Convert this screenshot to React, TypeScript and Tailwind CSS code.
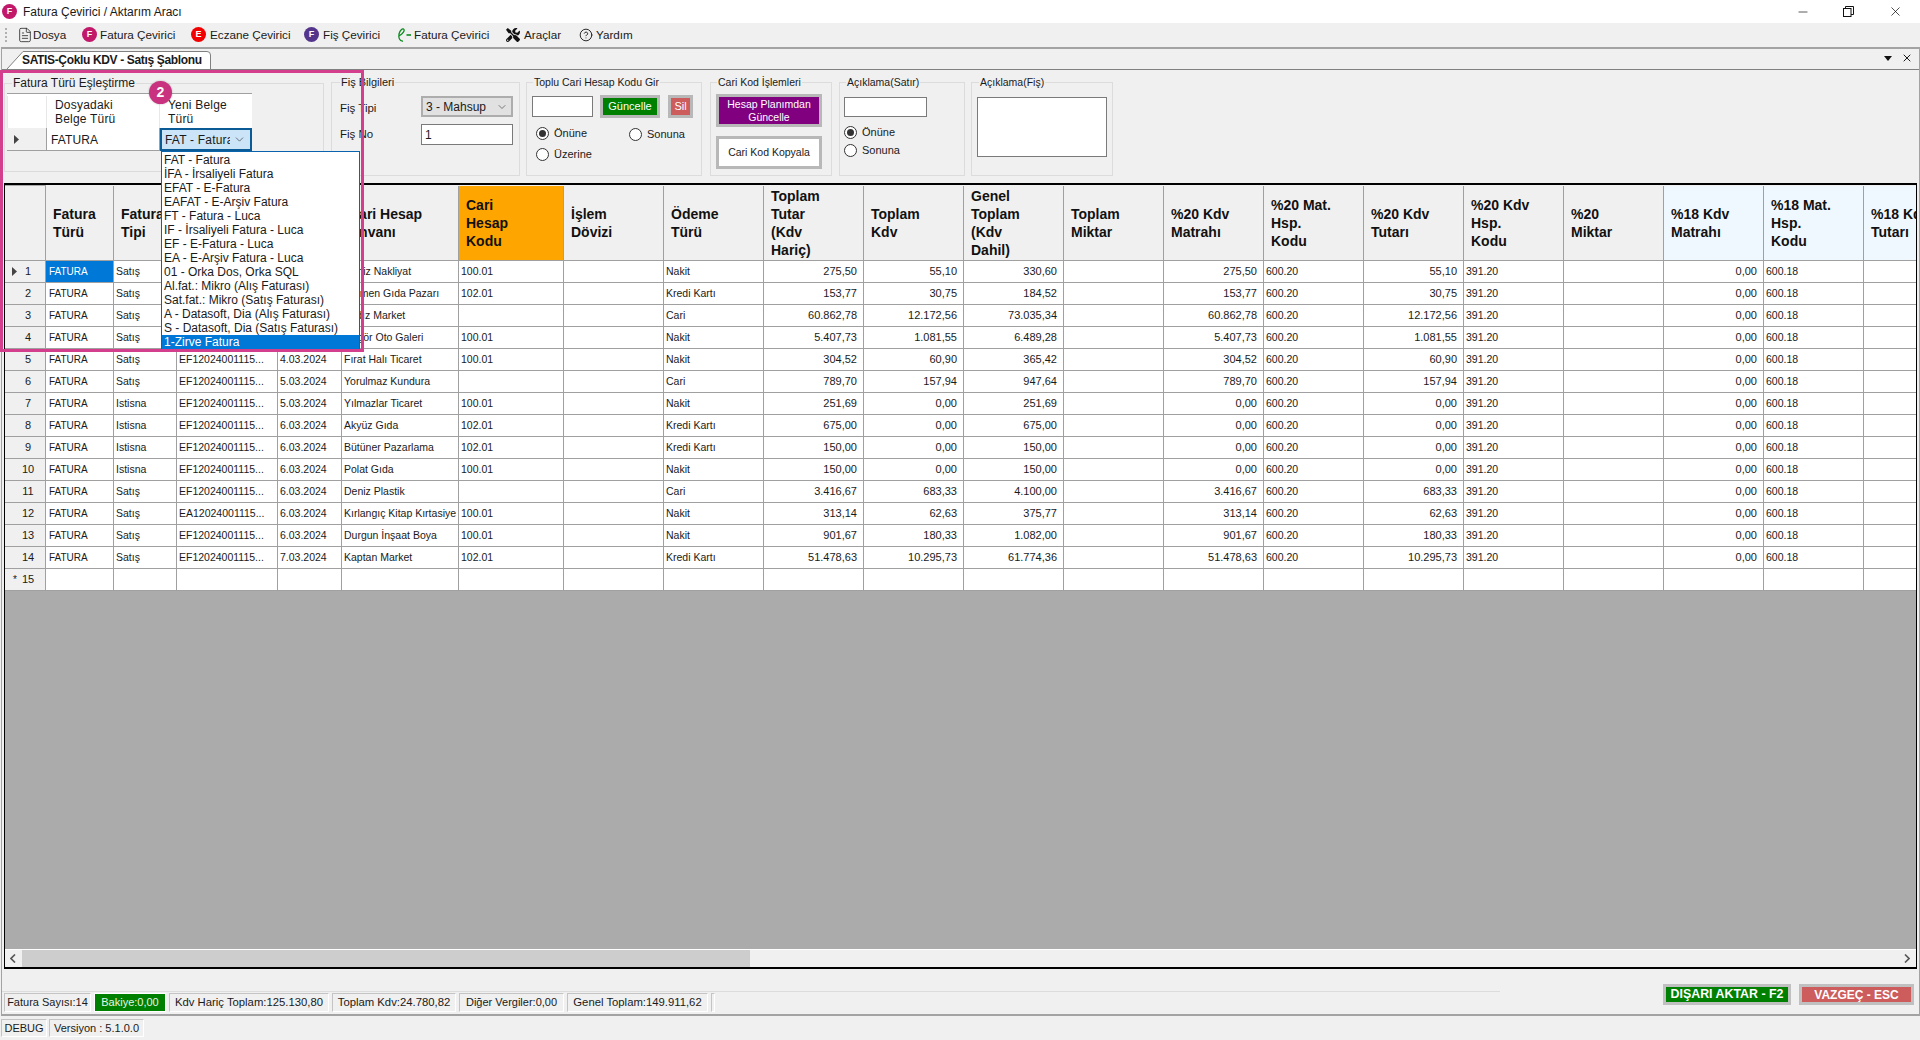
import { CircleHelp, FileText, ChevronDown, Minus, X } from "lucide-react";
import { FaTools } from "react-icons/fa";
import type { ReactNode } from "react";

const gridCols =
  "grid grid-cols-[41px_68px_63px_101px_64px_117px_105px_repeat(14,100px)] w-max";

type Row = {
  tip: string;
  belge: string;
  tarih: string;
  unvan: string;
  kod: string;
  odeme: string;
  tutar: string;
  kdv: string;
  genel: string;
  matrah: string;
  kdv20: string;
};

const rows: Row[] = [
  { tip: "Satış", belge: "EF12024001115...", tarih: "1.03.2024", unvan: "Deniz Nakliyat", kod: "100.01", odeme: "Nakit", tutar: "275,50", kdv: "55,10", genel: "330,60", matrah: "275,50", kdv20: "55,10" },
  { tip: "Satış", belge: "EF12024001115...", tarih: "2.03.2024", unvan: "Erkmen Gıda Pazarı", kod: "102.01", odeme: "Kredi Kartı", tutar: "153,77", kdv: "30,75", genel: "184,52", matrah: "153,77", kdv20: "30,75" },
  { tip: "Satış", belge: "EF12024001115...", tarih: "2.03.2024", unvan: "Yıldız Market", kod: "", odeme: "Cari", tutar: "60.862,78", kdv: "12.172,56", genel: "73.035,34", matrah: "60.862,78", kdv20: "12.172,56" },
  { tip: "Satış", belge: "EF12024001115...", tarih: "3.03.2024", unvan: "Özgör Oto Galeri", kod: "100.01", odeme: "Nakit", tutar: "5.407,73", kdv: "1.081,55", genel: "6.489,28", matrah: "5.407,73", kdv20: "1.081,55" },
  { tip: "Satış", belge: "EF12024001115...", tarih: "4.03.2024", unvan: "Fırat Halı Ticaret", kod: "100.01", odeme: "Nakit", tutar: "304,52", kdv: "60,90", genel: "365,42", matrah: "304,52", kdv20: "60,90" },
  { tip: "Satış", belge: "EF12024001115...", tarih: "5.03.2024", unvan: "Yorulmaz Kundura", kod: "", odeme: "Cari", tutar: "789,70", kdv: "157,94", genel: "947,64", matrah: "789,70", kdv20: "157,94" },
  { tip: "Istisna", belge: "EF12024001115...", tarih: "5.03.2024", unvan: "Yılmazlar Ticaret", kod: "100.01", odeme: "Nakit", tutar: "251,69", kdv: "0,00", genel: "251,69", matrah: "0,00", kdv20: "0,00" },
  { tip: "Istisna", belge: "EF12024001115...", tarih: "6.03.2024", unvan: "Akyüz Gıda", kod: "102.01", odeme: "Kredi Kartı", tutar: "675,00", kdv: "0,00", genel: "675,00", matrah: "0,00", kdv20: "0,00" },
  { tip: "Istisna", belge: "EF12024001115...", tarih: "6.03.2024", unvan: "Bütüner Pazarlama", kod: "102.01", odeme: "Kredi Kartı", tutar: "150,00", kdv: "0,00", genel: "150,00", matrah: "0,00", kdv20: "0,00" },
  { tip: "Istisna", belge: "EF12024001115...", tarih: "6.03.2024", unvan: "Polat Gıda", kod: "100.01", odeme: "Nakit", tutar: "150,00", kdv: "0,00", genel: "150,00", matrah: "0,00", kdv20: "0,00" },
  { tip: "Satış", belge: "EF12024001115...", tarih: "6.03.2024", unvan: "Deniz Plastik", kod: "", odeme: "Cari", tutar: "3.416,67", kdv: "683,33", genel: "4.100,00", matrah: "3.416,67", kdv20: "683,33" },
  { tip: "Satış", belge: "EA12024001115...", tarih: "6.03.2024", unvan: "Kırlangıç Kitap Kırtasiye", kod: "100.01", odeme: "Nakit", tutar: "313,14", kdv: "62,63", genel: "375,77", matrah: "313,14", kdv20: "62,63" },
  { tip: "Satış", belge: "EF12024001115...", tarih: "6.03.2024", unvan: "Durgun İnşaat Boya", kod: "100.01", odeme: "Nakit", tutar: "901,67", kdv: "180,33", genel: "1.082,00", matrah: "901,67", kdv20: "180,33" },
  { tip: "Satış", belge: "EF12024001115...", tarih: "7.03.2024", unvan: "Kaptan Market", kod: "102.01", odeme: "Kredi Kartı", tutar: "51.478,63", kdv: "10.295,73", genel: "61.774,36", matrah: "51.478,63", kdv20: "10.295,73" },
];

const headers: { lines: string[]; tone?: string }[] = [
  { lines: ["Fatura", "Türü"] },
  { lines: ["Fatura", "Tipi"] },
  { lines: ["Belge", "No"] },
  { lines: ["Tarih"] },
  { lines: ["Cari Hesap", "Ünvanı"] },
  { lines: ["Cari", "Hesap", "Kodu"], tone: "bg-[#ffa500]" },
  { lines: ["İşlem", "Dövizi"] },
  { lines: ["Ödeme", "Türü"] },
  { lines: ["Toplam", "Tutar", "(Kdv", "Hariç)"] },
  { lines: ["Toplam", "Kdv"] },
  { lines: ["Genel", "Toplam", "(Kdv", "Dahil)"] },
  { lines: ["Toplam", "Miktar"] },
  { lines: ["%20 Kdv", "Matrahı"] },
  { lines: ["%20 Mat.", "Hsp.", "Kodu"] },
  { lines: ["%20 Kdv", "Tutarı"] },
  { lines: ["%20 Kdv", "Hsp.", "Kodu"] },
  { lines: ["%20", "Miktar"] },
  { lines: ["%18 Kdv", "Matrahı"], tone: "bg-[#f0f8ff]" },
  { lines: ["%18 Mat.", "Hsp.", "Kodu"], tone: "bg-[#f0f8ff]" },
  { lines: ["%18 Kdv", "Tutarı"], tone: "bg-[#f0f8ff]" },
];

const dropdownItems = [
  "FAT - Fatura",
  "İFA - İrsaliyeli Fatura",
  "EFAT - E-Fatura",
  "EAFAT - E-Arşiv Fatura",
  "FT - Fatura - Luca",
  "IF - İrsaliyeli Fatura - Luca",
  "EF - E-Fatura - Luca",
  "EA - E-Arşiv Fatura - Luca",
  "01 - Orka Dos, Orka SQL",
  "Al.fat.: Mikro (Alış Faturası)",
  "Sat.fat.: Mikro (Satış Faturası)",
  "A - Datasoft, Dia (Alış Faturası)",
  "S - Datasoft, Dia (Satış Faturası)",
  "1-Zirve Fatura",
];

function Triangle() {
  return (
    <svg width="5" height="9" viewBox="0 0 5 9" className="shrink-0">
      <path d="M0 0 L5 4.5 L0 9 Z" fill="#444" />
    </svg>
  );
}

function LetterIcon({ letter, tone }: { letter: string; tone: string }) {
  return (
    <span className={`flex h-[15px] w-[15px] items-center justify-center rounded-full text-[9px] font-bold leading-none text-white ${tone}`}>
      {letter}
    </span>
  );
}

function MenuItem({ icon, label, className }: { icon: ReactNode; label: string; className: string }) {
  return (
    <div className={`flex items-center ${className}`}>
      {icon}
      <span className="text-[11.7px] text-[#1a1a1a] whitespace-nowrap">{label}</span>
    </div>
  );
}

function Group({ title, className, titleClass, children }: { title: string; className: string; titleClass: string; children?: ReactNode }) {
  return (
    <div className={`relative shrink-0 border border-[#dcdcdc] ${className}`}>
      <span className={`absolute top-[-8px] bg-[#f0f0f0] px-[1px] leading-[14px] text-[#1a1a1a] whitespace-nowrap ${titleClass}`}>
        {title}
      </span>
      {children}
    </div>
  );
}

function Radio({ label, checked, className = "" }: { label: string; checked?: boolean; className?: string }) {
  return (
    <div className={`flex items-center gap-[5px] text-[11px] leading-[14px] text-[#1a1a1a] ${className}`}>
      <span className="flex h-[13px] w-[13px] items-center justify-center rounded-full border border-[#333] bg-white">
        {checked && <span className="h-[7px] w-[7px] rounded-full bg-[#333]" />}
      </span>
      {label}
    </div>
  );
}

function StatusBox({ children, className }: { children: ReactNode; className: string }) {
  return (
    <div className={`flex items-center justify-center border border-t-[#c4c4c4] border-l-[#c4c4c4] border-r-white border-b-white whitespace-nowrap ${className}`}>
      {children}
    </div>
  );
}

function GridCell({ children, className = "" }: { children?: ReactNode; className?: string }) {
  return (
    <div className={`flex h-[22px] items-center overflow-hidden whitespace-nowrap border-b border-r border-[#a0a0a0] bg-white text-[#1a1a1a] ${className}`}>
      {children}
    </div>
  );
}

function Num({ value }: { value?: string }) {
  return <GridCell className="justify-end pr-[6px] text-[11px]">{value}</GridCell>;
}

function Txt({ value }: { value?: string }) {
  return <GridCell className="pl-[2px] text-[10.5px]">{value}</GridCell>;
}

export default function App() {
  return (
    <div className="relative flex h-[1040px] w-[1920px] flex-col overflow-hidden bg-[#f0f0f0] font-['Liberation_Sans',Arial,sans-serif] text-[#1a1a1a]">
      {/* title bar */}
      <div className="flex h-[23px] shrink-0 items-center bg-white pl-[2px]">
        <LetterIcon letter="F" tone="bg-[#c2186a]" />
        <span className="ml-[6px] text-[12px] text-[#1a1a1a]">Fatura Çevirici / Aktarım Aracı</span>
        <div className="ml-auto flex items-center text-black">
          <Minus size={14} strokeWidth={1.1} className="mr-[33px]" />
          <svg width="11" height="11" viewBox="0 0 11 11" className="mr-[34px]" fill="none" stroke="#111">
            <rect x="0.5" y="2.5" width="7.5" height="8" />
            <path d="M2.5 2.5 V0.5 H10.5 V8.5 H8" />
          </svg>
          <X size={15} strokeWidth={1.1} className="mr-[17px]" />
        </div>
      </div>

      {/* menu */}
      <div className="flex h-[24px] shrink-0 items-center pl-[5px]">
        <div className="mr-[10px] h-[14px] w-[2px] border-l-2 border-dotted border-[#b0b0b0]" />
        <MenuItem className="w-[65px]" icon={<FileText size={16} strokeWidth={1.2} color="#222" />} label="Dosya" />
        <MenuItem className="w-[109px] gap-[3px]" icon={<LetterIcon letter="F" tone="bg-[#c2186a]" />} label="Fatura Çevirici" />
        <MenuItem className="w-[113px] gap-[4px]" icon={<LetterIcon letter="E" tone="bg-[#f00000]" />} label="Eczane Çevirici" />
        <MenuItem className="w-[92px] gap-[4px]" icon={<LetterIcon letter="F" tone="bg-[#54358c]" />} label="Fiş Çevirici" />
        <MenuItem
          className="w-[110px] gap-[2px]"
          icon={
            <svg width="16" height="16" viewBox="0 0 16 16" fill="none" stroke="#0a8a1e" strokeWidth="1.3">
              <path d="M3 9 C6 7 9 4.5 8 2.5 C7 0.8 4 3 3 7 C2.4 10.5 3.5 14.5 7 14" />
              <path d="M10.5 8 H15" strokeWidth="1.6" />
            </svg>
          }
          label="Fatura Çevirici"
        />
        <MenuItem className="w-[73px] gap-[4px]" icon={<FaTools size={14} color="#111" />} label="Araçlar" />
        <MenuItem className="gap-[3px]" icon={<CircleHelp size={14} strokeWidth={1.5} color="#111" />} label="Yardım" />
      </div>

      {/* main panel */}
      <div className="ml-[1px] flex min-h-0 flex-1 flex-col border-x border-b-2 border-t-2 border-[#a3a3a3]">
        {/* tab strip */}
        <div className="flex h-[21px] shrink-0 items-end border-b border-[#808080]">
          <div className="relative ml-[5px] flex h-[18px] w-[204px] items-center">
            <svg width="204" height="18" viewBox="0 0 204 18" className="absolute inset-0">
              <path d="M0 18 L16 0.5 H200 Q203.5 0.5 203.5 4 V18" fill="white" stroke="#808080" />
            </svg>
            <span className="relative ml-[15px] text-[12px] font-bold tracking-[-0.35px] whitespace-nowrap">SATIS-Çoklu KDV - Satış Şablonu</span>
          </div>
          <div className="ml-auto mb-[5px] flex items-center">
            <svg width="8" height="5" viewBox="0 0 8 5" className="mr-[9px]">
              <path d="M0 0 H8 L4 5 Z" fill="#111" />
            </svg>
            <X size={12} strokeWidth={2} className="mr-[6px]" />
          </div>
        </div>

        {/* option groups */}
        <div className="flex h-[113px] shrink-0 pl-[2px] pt-[12px]">
          <Group title="Fatura Türü Eşleştirme" className="mt-[1px] h-[89px] w-[320px] pl-[2px] pt-[9px]" titleClass="left-[7px] text-[12px]">
            <div className="w-[245px] border-t border-[#a0a0a0] text-[12px]">
              <div className="flex h-[34px] bg-white pt-[2px] leading-[14px]">
                <div className="w-[40px] border-x border-[#e8e8e8]" />
                <div className="flex w-[113px] flex-col justify-center border-r border-[#e8e8e8] pl-[8px] tracking-[0.2px]">
                  <span>Dosyadaki</span>
                  <span>Belge Türü</span>
                </div>
                <div className="flex w-[92px] flex-col justify-center pl-[8px] tracking-[0.2px]">
                  <span>Yeni Belge</span>
                  <span>Türü</span>
                </div>
              </div>
              <div className="flex h-[23px]">
                <div className="flex w-[40px] items-center border-b border-r border-[#a0a0a0] pl-[7px]">
                  <Triangle />
                </div>
                <div className="flex w-[113px] items-center border-b border-r border-[#a0a0a0] bg-white pl-[4px] pt-[2px] tracking-[0.1px]">FATURA</div>
                <div className="flex w-[92px] items-center overflow-hidden border-2 border-[#0a5a96] bg-[#cce4f7] pl-[3px]">
                  <span className="w-[65px] overflow-hidden whitespace-nowrap tracking-[0.2px]">FAT - Fatura</span>
                  <ChevronDown size={13} strokeWidth={1.2} color="#333" className="ml-[3px]" />
                </div>
              </div>
            </div>
          </Group>

          <Group title="Fiş Bilgileri" className="ml-[7px] h-[94px] w-[189px] pl-[8px] pt-[13px]" titleClass="left-[8px] text-[11px]">
            <div className="flex h-[21px] items-center text-[11.5px]">
              <span className="mt-[4px] w-[81px]">Fiş Tipi</span>
              <div className="flex h-[21px] w-[92px] items-center justify-between border-2 border-[#adadad] bg-[#e1e1e1] pl-[3px] pr-[3px]">
                <span className="text-[12px]">3 - Mahsup</span>
                <ChevronDown size={12} strokeWidth={1.2} color="#333" />
              </div>
            </div>
            <div className="mt-[7px] flex h-[21px] items-center text-[11.5px]">
              <span className="w-[81px]">Fiş No</span>
              <div className="flex h-[21px] w-[92px] items-center border border-[#7a7a7a] bg-white pl-[3px] text-[12px]">1</div>
            </div>
          </Group>

          <Group title="Toplu Cari Hesap Kodu Gir" className="ml-[6px] h-[94px] w-[176px] pl-[5px] pt-[12px]" titleClass="left-[6px] text-[10.5px]">
            <div className="flex items-start">
              <div className="mt-[1px] h-[21px] w-[61px] border border-[#7a7a7a] bg-white" />
              <div className="ml-[7px] flex h-[23px] w-[60px] items-center justify-center border-[3px] border-[#b8b8b8] bg-[#008000] text-[11px] text-white">Güncelle</div>
              <div className="ml-[8px] flex h-[23px] w-[25px] items-center justify-center border-[3px] border-[#b8b8b8] bg-[#cd5c5c] text-[11px] text-white">Sil</div>
            </div>
            <div className="mt-[7px] flex h-[16px] pl-[4px]">
              <Radio checked label="Önüne" className="w-[93px]" />
              <Radio label="Sonuna" className="mt-[2px]" />
            </div>
            <Radio label="Üzerine" className="ml-[4px] mt-[6px]" />
          </Group>

          <Group title="Cari Kod İşlemleri" className="ml-[8px] h-[94px] w-[122px] pl-[5px] pt-[11px]" titleClass="left-[6px] text-[10.5px]">
            <div className="flex h-[33px] w-[106px] flex-col items-center justify-center border-[3px] border-[#b8b8b8] bg-[#800080] text-[10.5px] leading-[13px] text-white">
              <span>Hesap Planımdan</span>
              <span>Güncelle</span>
            </div>
            <div className="mt-[9px] flex h-[33px] w-[106px] items-center justify-center border-[3px] border-[#b8b8b8] bg-white text-[10.5px]">Cari Kod Kopyala</div>
          </Group>

          <Group title="Açıklama(Satır)" className="ml-[7px] h-[94px] w-[126px] pl-[4px] pt-[14px]" titleClass="left-[6px] text-[10.5px]">
            <div className="h-[20px] w-[83px] border border-[#7a7a7a] bg-white" />
            <Radio checked label="Önüne" className="mt-[8px]" />
            <Radio label="Sonuna" className="mt-[4px]" />
          </Group>

          <Group title="Açıklama(Fiş)" className="ml-[6px] h-[94px] w-[142px] pl-[5px] pt-[14px]" titleClass="left-[7px] text-[10.5px]">
            <div className="h-[60px] w-[130px] border border-[#7a7a7a] bg-white" />
          </Group>
        </div>

        {/* data grid */}
        <div className="ml-[2px] mr-[2px] flex min-h-0 flex-1 flex-col overflow-hidden border-x border-b-2 border-t-2 border-black bg-[#ababab]">
          <div className="min-h-0 flex-1 overflow-hidden">
            <div className={gridCols}>
              <div className="mt-[1px] h-[75px] border-b border-r border-[#a0a0a0] bg-[#f0f0f0]" />
              {headers.map((h, i) => (
                <div
                  key={i}
                  className="flex h-[76px] flex-col border-b border-[#a0a0a0] bg-[#f0f0f0] pt-[1px] text-[14px] font-bold leading-[18px] text-[#111] whitespace-nowrap"
                >
                  <div className={`flex h-[74px] flex-col justify-center border-r border-[#a0a0a0] pl-[7px] ${h.tone ?? ""}`}>
                    {h.lines.map((l) => (
                      <span key={l}>{l}</span>
                    ))}
                  </div>
                </div>
              ))}
              {rows.flatMap((r, i) => [
                <div key={`n${i}`} className="flex h-[22px] items-center border-b border-r border-[#a0a0a0] bg-[#f0f0f0] text-[11px]">
                  <span className="flex w-[12px] justify-end">{i === 0 && <Triangle />}</span>
                  <span className="w-[22px] text-center">{i + 1}</span>
                </div>,
                <GridCell key={`a${i}`} className={`pl-[3px] text-[10px] ${i === 0 ? "!bg-[#0078d7] text-white" : ""}`}>FATURA</GridCell>,
                <Txt key={`b${i}`} value={r.tip} />,
                <Txt key={`c${i}`} value={r.belge} />,
                <Txt key={`d${i}`} value={r.tarih} />,
                <Txt key={`e${i}`} value={r.unvan} />,
                <Txt key={`f${i}`} value={r.kod} />,
                <Txt key={`g${i}`} />,
                <Txt key={`h${i}`} value={r.odeme} />,
                <Num key={`i${i}`} value={r.tutar} />,
                <Num key={`j${i}`} value={r.kdv} />,
                <Num key={`k${i}`} value={r.genel} />,
                <Txt key={`l${i}`} />,
                <Num key={`m${i}`} value={r.matrah} />,
                <Txt key={`o${i}`} value="600.20" />,
                <Num key={`p${i}`} value={r.kdv20} />,
                <Txt key={`q${i}`} value="391.20" />,
                <Txt key={`r${i}`} />,
                <Num key={`s${i}`} value="0,00" />,
                <Txt key={`t${i}`} value="600.18" />,
                <Num key={`u${i}`} value="0,00" />,
              ])}
              <div className="flex h-[22px] items-center border-b border-r border-[#a0a0a0] bg-[#f0f0f0] text-[11px]">
                <span className="flex w-[12px] justify-end text-[10px] leading-none">*</span>
                <span className="w-[22px] text-center">15</span>
              </div>
              {headers.map((_, i) => (
                <GridCell key={i} />
              ))}
            </div>
          </div>
          {/* horizontal scrollbar */}
          <div className="flex h-[18px] shrink-0 items-center border-t border-white bg-[#f0f0f0]">
            <svg width="6" height="9" viewBox="0 0 6 9" className="ml-[5px]" fill="none" stroke="#555" strokeWidth="1.6">
              <path d="M5 0.5 L1 4.5 L5 8.5" />
            </svg>
            <div className="ml-[6px] h-full w-[728px] bg-[#cdcdcd]" />
            <svg width="6" height="9" viewBox="0 0 6 9" className="ml-auto mr-[6px]" fill="none" stroke="#555" strokeWidth="1.6">
              <path d="M1 0.5 L5 4.5 L1 8.5" />
            </svg>
          </div>
        </div>

        {/* totals and actions */}
        <div className="flex h-[45px] shrink-0 items-start">
          <div className="mt-[22px] flex h-[22px] w-[1498px] items-center gap-[3px] border-t border-[#dcdcdc] pl-[2px] text-[11px] text-[#1a1a1a]">
            <StatusBox className="h-[19px] w-[87px]">Fatura Sayısı:14</StatusBox>
            <StatusBox className="h-[19px] w-[72px] !border-white bg-[#008000] !text-[#e8f5e8]">Bakiye:0,00</StatusBox>
            <StatusBox className="h-[19px] w-[160px] text-[11.3px]">Kdv Hariç Toplam:125.130,80</StatusBox>
            <StatusBox className="h-[19px] w-[124px] text-[11.3px]">Toplam Kdv:24.780,82</StatusBox>
            <StatusBox className="h-[19px] w-[105px]">Diğer Vergiler:0,00</StatusBox>
            <StatusBox className="h-[19px] w-[141px] text-[11.3px]">Genel Toplam:149.911,62</StatusBox>
            <StatusBox className="h-[19px] w-[4px]"> </StatusBox>
          </div>
          <div className="ml-[163px] mt-[15px] flex gap-[8px]">
            <div className="flex h-[21px] w-[128px] items-center justify-center border-[3px] border-[#c0c0c0] bg-[#008000] text-[12.4px] font-bold text-white whitespace-nowrap">DIŞARI AKTAR - F2</div>
            <div className="flex h-[21px] w-[115px] items-center justify-center border-[3px] border-[#c0c0c0] bg-[#cd5c5c] text-[12px] font-bold text-white whitespace-nowrap">VAZGEÇ - ESC</div>
          </div>
        </div>
      </div>

      {/* bottom strip */}
      <div className="flex h-[24px] shrink-0 items-center gap-[2px] pl-[1px] text-[11px]">
        <StatusBox className="h-[18px] w-[46px]">DEBUG</StatusBox>
        <StatusBox className="h-[18px] w-[95px]">Versiyon : 5.1.0.0</StatusBox>
      </div>

      {/* open combo list */}
      <div className="absolute left-[161px] top-[151px] w-[199px] border border-[#0a64ad] bg-white py-[1px] text-[12px] leading-[14px] text-[#1a1a1a]">
        {dropdownItems.map((d, i) => (
          <div key={d} className={`h-[14px] pl-[2px] whitespace-nowrap ${i === dropdownItems.length - 1 ? "bg-[#0078d7] text-white" : ""}`}>
            {d}
          </div>
        ))}
      </div>

      {/* callout */}
      <div className="pointer-events-none absolute left-0 top-[70px] h-[282px] w-[364px] border-[3px] border-[#d43f8d]" />
      <div className="absolute left-[149px] top-[81px] flex h-[23px] w-[23px] items-center justify-center rounded-full bg-[#c8327e] text-[14px] font-bold text-white shadow-[0_0_2px_rgba(0,0,0,0.3)]">
        2
      </div>
    </div>
  );
}
